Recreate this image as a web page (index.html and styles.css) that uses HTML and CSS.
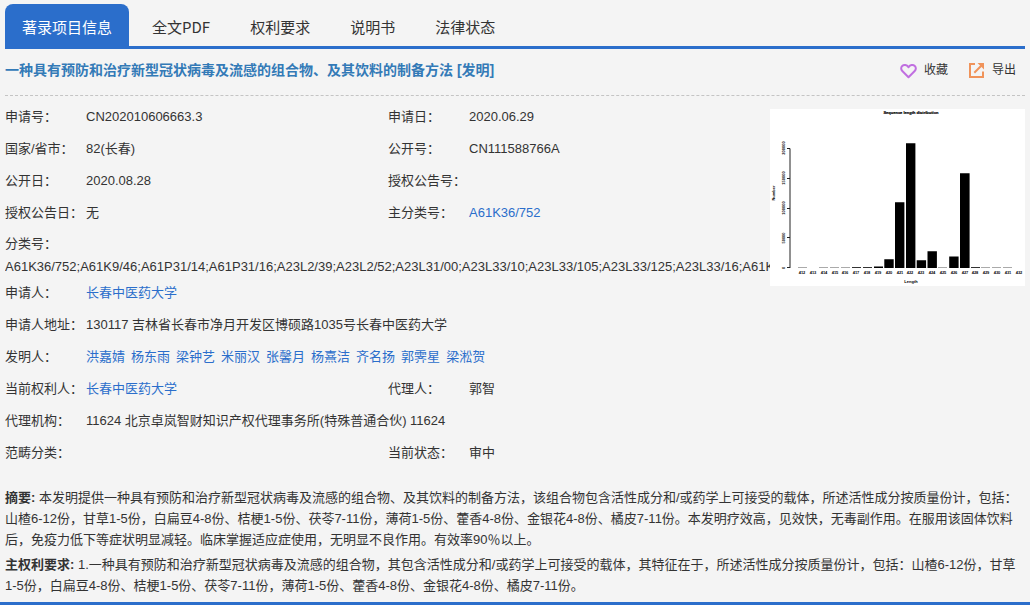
FILE: index.html
```html
<!DOCTYPE html>
<html lang="zh-CN">
<head>
<meta charset="utf-8">
<meta name="viewport" content="width=device-width, initial-scale=1">
<title>一种具有预防和治疗新型冠状病毒及流感的组合物、及其饮料的制备方法</title>
<link rel="stylesheet" href="styles.css">
</head>
<body>
<main class="page">
  <div class="tabs" role="tablist">
    <button class="tab tab-active" type="button" role="tab" aria-selected="true">著录项目信息</button>
    <button class="tab" type="button" role="tab" aria-selected="false">全文PDF</button>
    <button class="tab" type="button" role="tab" aria-selected="false">权利要求</button>
    <button class="tab" type="button" role="tab" aria-selected="false">说明书</button>
    <button class="tab" type="button" role="tab" aria-selected="false">法律状态</button>
  </div>

  <header class="heading">
    <h1 class="title">一种具有预防和治疗新型冠状病毒及流感的组合物、及其饮料的制备方法 [发明]</h1>
    <div class="actions">
      <button class="action" type="button">
        <svg class="icon" viewBox="0 0 17 17" aria-hidden="true"><path d="M8.500 15.200 2.300 9C.8 7.500.8 5.200 2.200 3.900 3.900 2.300 6.800 2.600 8.500 5.200 10.200 2.600 13.100 2.300 14.800 3.900 16.200 5.200 16.200 7.500 14.700 9Z" fill="none" stroke="#c06fe0" stroke-width="2" stroke-linejoin="round"/></svg>
        <span>收藏</span>
      </button>
      <button class="action" type="button">
        <svg class="icon" viewBox="0 0 17 17" aria-hidden="true"><path d="M7 2H2V15H15V9.500M6.300 10.700 14 3" fill="none" stroke="#f0935a" stroke-width="2"/><path d="M9.500 1H16V7.500Z" fill="#f0935a"/></svg>
        <span>导出</span>
      </button>
    </div>
  </header>

  <section class="details">
    <dl class="fields">
      <div class="row"><dt>申请号：</dt><dd>CN202010606663.3</dd><dt>申请日：</dt><dd>2020.06.29</dd></div>
      <div class="row"><dt>国家/省市：</dt><dd>82(长春)</dd><dt>公开号：</dt><dd>CN111588766A</dd></div>
      <div class="row"><dt>公开日：</dt><dd>2020.08.28</dd><dt>授权公告号：</dt><dd></dd></div>
      <div class="row"><dt>授权公告日：</dt><dd>无</dd><dt>主分类号：</dt><dd><a href="#ipc">A61K36/752</a></dd></div>
      <div class="codes"><dt>分类号：</dt><dd>A61K36/752;A61K9/46;A61P31/14;A61P31/16;A23L2/39;A23L2/52;A23L31/00;A23L33/10;A23L33/105;A23L33/125;A23L33/16;A61K31</dd></div>
      <div class="row row-wide"><dt>申请人：</dt><dd><a href="#applicant">长春中医药大学</a></dd></div>
      <div class="row row-wide"><dt>申请人地址：</dt><dd>130117 吉林省长春市净月开发区博硕路1035号长春中医药大学</dd></div>
      <div class="row row-wide"><dt>发明人：</dt><dd class="people"><a href="#p1">洪嘉婧</a><a href="#p2">杨东雨</a><a href="#p3">梁钟艺</a><a href="#p4">米丽汉</a><a href="#p5">张馨月</a><a href="#p6">杨熹洁</a><a href="#p7">齐名扬</a><a href="#p8">郭霁星</a><a href="#p9">梁淞贺</a></dd></div>
      <div class="row"><dt>当前权利人：</dt><dd><a href="#owner">长春中医药大学</a></dd><dt>代理人：</dt><dd>郭智</dd></div>
      <div class="row row-wide"><dt>代理机构：</dt><dd>11624 北京卓岚智财知识产权代理事务所(特殊普通合伙) 11624</dd></div>
      <div class="row"><dt>范畴分类：</dt><dd></dd><dt>当前状态：</dt><dd>审中</dd></div>
    </dl>
    <svg class="chart" viewBox="0 0 255 177" role="img" aria-label="Sequence length distribution">
      <rect width="255" height="177" fill="#fff"/>
      <text class="chart-title" x="141" y="5" text-anchor="middle">Sequence length distribution</text>
      <path d="M20 39.500V159M17 39.500H20M17 69.500H20M17 99.500H20M17 128.500H20M17 158.500H20" fill="none" stroke="#222" stroke-width="1"/>
      <g class="chart-label" text-anchor="middle">
        <text transform="translate(15 39) rotate(-90)">200000</text>
        <text transform="translate(15 69) rotate(-90)">150000</text>
        <text transform="translate(15 99) rotate(-90)">100000</text>
        <text transform="translate(15 129) rotate(-90)">50000</text>
        <text transform="translate(15 159) rotate(-90)">0</text>
        <text transform="translate(5 84) rotate(-90)">Number</text>
        <text x="32" y="165">412</text><text x="43" y="165">413</text><text x="54" y="165">414</text><text x="65" y="165">415</text><text x="75" y="165">416</text><text x="86" y="165">417</text><text x="97" y="165">418</text><text x="108" y="165">419</text><text x="119" y="165">420</text><text x="130" y="165">421</text><text x="140" y="165">422</text><text x="151" y="165">423</text><text x="162" y="165">424</text><text x="173" y="165">425</text><text x="184" y="165">426</text><text x="195" y="165">427</text><text x="205" y="165">428</text><text x="216" y="165">429</text><text x="227" y="165">430</text><text x="238" y="165">431</text><text x="249" y="165">432</text>
        <text x="141" y="174">Length</text>
      </g>
      <path d="M28 158.500H37M49 158.500H58M60 158.500H69M71 158.500H80M168 158.500H177M211 158.500H220M222 158.500H231M233 158.500H242" stroke="#aaa" stroke-width="1"/>
      <path d="M82 158.500H91M93 158.500H102M201 158.500H210" stroke="#333" stroke-width="1"/>
      <path d="M104 157.500h9v1.500h-9zM114.300 150.300h9.400V159h-9.400zM125 93.300h9.400V159H125zM136 34.300h9.400V159H136zM146.700 151.300h9.400V159h-9.400zM157.500 142.300h9.400V159h-9.400zM179.200 147.500h9.400V159h-9.400zM190 64.300h9.600V159H190z" fill="#000"/>
    </svg>
  </section>

  <section class="texts">
    <p><strong>摘要:</strong> 本发明提供一种具有预防和治疗新型冠状病毒及流感的组合物、及其饮料的制备方法，该组合物包含活性成分和/或药学上可接受的载体，所述活性成分按质量份计，包括：山楂6-12份，甘草1-5份，白扁豆4-8份、桔梗1-5份、茯苓7-11份，薄荷1-5份、藿香4-8份、金银花4-8份、橘皮7-11份。本发明疗效高，见效快，无毒副作用。在服用该固体饮料后，免疫力低下等症状明显减轻。临床掌握适应症使用，无明显不良作用。有效率90％以上。</p>
    <p><strong>主权利要求:</strong> 1.一种具有预防和治疗新型冠状病毒及流感的组合物，其包含活性成分和/或药学上可接受的载体，其特征在于，所述活性成分按质量份计，包括：山楂6-12份，甘草1-5份，白扁豆4-8份、桔梗1-5份、茯苓7-11份，薄荷1-5份、藿香4-8份、金银花4-8份、橘皮7-11份。</p>
  </section>
</main>
</body>
</html>
```
FILE: styles.css
```css
* {
  box-sizing: border-box;
}

body {
  margin: 0;
  background: #f4f4f4;
  color: #333;
  font: 13px/21px "Liberation Sans", "Noto Sans CJK SC", sans-serif;
}

button {
  padding: 0;
  border: 0;
  background: none;
  color: inherit;
  font: inherit;
  cursor: pointer;
}

a {
  color: #2b6ecb;
  text-decoration: none;
}

.page {
  padding-top: 4px;
  border-bottom: 3px solid #2b6ecb;
}

.tabs {
  display: flex;
  gap: 6px;
  margin: 0 5px;
  border-bottom: 3px solid #2b6ecb;
}

.tab {
  height: 42px;
  padding: 4px 17px 0;
  border-radius: 8px 8px 0 0;
  font: 15px/22px "Noto Sans CJK SC", sans-serif;
}

.tab-active {
  background: #2b6ecb;
  color: #fff;
}

.heading {
  display: flex;
  justify-content: space-between;
  align-items: center;
  height: 47px;
  margin: 0 5px;
  padding-bottom: 4px;
  border-bottom: 1px dashed #c4c4c4;
}

.title {
  margin: 0;
  color: #337ab7;
  font-size: 14px;
  font-weight: bold;
}

.actions {
  display: flex;
  gap: 20px;
  padding-right: 9px;
}

.action {
  display: flex;
  align-items: center;
  gap: 7px;
  font-size: 12px;
}

.icon {
  width: 17px;
  height: 17px;
}

.details {
  display: flex;
  align-items: flex-start;
  margin: 5px 5px 0;
}

.fields {
  flex: 1;
  min-width: 0;
  margin: 0;
  overflow: hidden;
}

.fields dd {
  margin: 0;
}

.row {
  display: grid;
  grid-template-columns: 81px 302px 81px 1fr;
  line-height: 32px;
  white-space: nowrap;
}

.row-wide {
  grid-template-columns: 81px 1fr;
}

.codes {
  padding-bottom: 2px;
  white-space: nowrap;
}

.codes dt {
  line-height: 29px;
}

.codes dd {
  line-height: 17px;
}

.people {
  display: flex;
  gap: 6px;
}

.chart {
  flex: none;
  width: 255px;
  height: 177px;
  margin-top: 8px;
}

.chart-title {
  font: bold 4px "Liberation Sans", sans-serif;
  stroke: #000;
  stroke-width: 0.2;
}

.chart-label {
  font: bold 4px "Liberation Sans", sans-serif;
}

.texts {
  margin: 18px 5px 0;
  padding-bottom: 2px;
}

.texts p {
  margin: 0 0 4px;
}
```
